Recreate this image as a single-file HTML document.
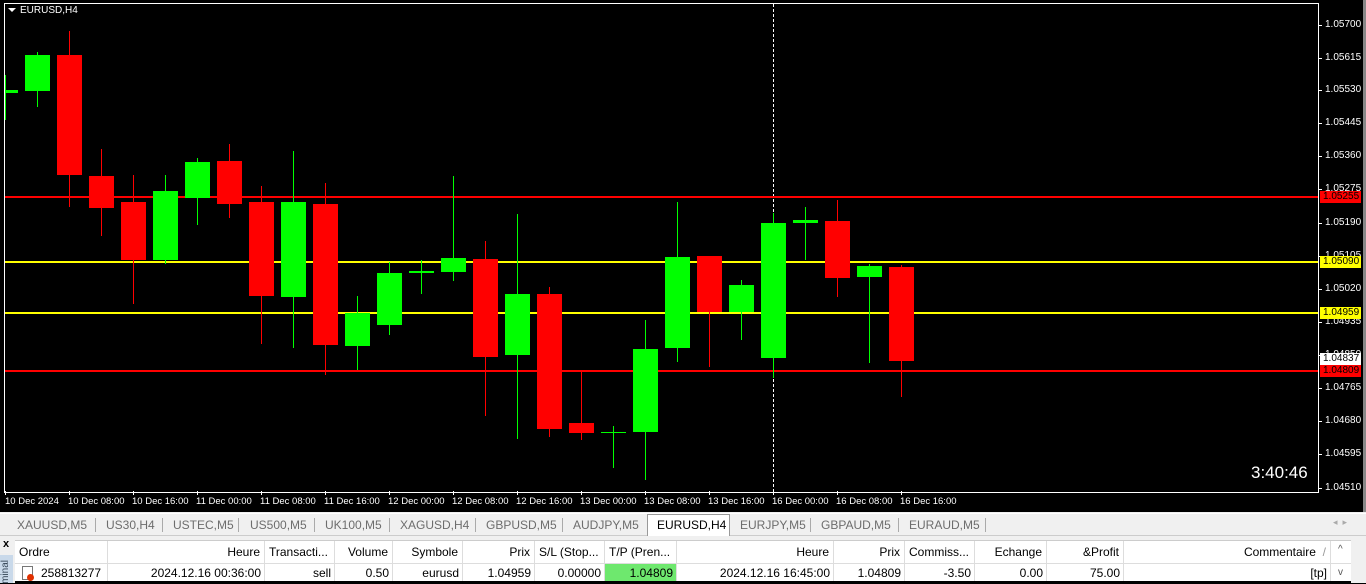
<!DOCTYPE html>
<html><head><meta charset="utf-8"><style>
*{margin:0;padding:0;box-sizing:border-box}
body{width:1366px;height:583px;overflow:hidden;background:#000;font-family:"Liberation Sans",sans-serif;position:relative}
.a{position:absolute}
.pl{position:absolute;left:1325px;font-size:10px;color:#fff;line-height:10px}
.tk{position:absolute;left:1318px;width:4px;height:1px;background:#fff}
.box{position:absolute;left:1320px;width:41px;height:12px;font-size:10px;line-height:12px;padding-left:3px}
.tl{position:absolute;top:496px;font-size:9.5px;color:#fff}
.tt{position:absolute;top:491px;width:1px;height:4px;background:#fff}
.tab{position:absolute;top:516px;font-size:12px;color:#6d6d6d;height:18px;line-height:18px}
.sep{position:absolute;top:518px;width:1px;height:14px;background:#aaa}
.h{position:absolute;top:541px;height:22px;line-height:22px;font-size:12px;color:#000;border-right:1px solid #ddd;padding:0 4px}
.r{position:absolute;top:564px;height:18px;line-height:18px;font-size:12px;color:#000;border-right:1px solid #ddd;padding:0 3px;text-align:right}
</style></head><body>
<div class="a" style="left:4px;top:3px;width:1315px;height:490px;border:1px solid #fff;border-right:1px solid #fff"></div>
<div class="a" style="left:8px;top:8px;width:0;height:0;border-left:4px solid transparent;border-right:4px solid transparent;border-top:4px solid #fff"></div>
<div class="a" style="left:20px;top:5px;font-size:10px;color:#fff">EURUSD,H4</div>
<div class="a" style="left:773px;top:4px;height:488px;border-left:1px dashed #fff"></div>
<div class="a" style="left:5px;top:196px;width:1313px;height:2px;background:#f00"></div>
<div class="a" style="left:5px;top:261px;width:1313px;height:2px;background:#ff0"></div>
<div class="a" style="left:5px;top:312px;width:1313px;height:2px;background:#ff0"></div>
<div class="a" style="left:5px;top:370px;width:1313px;height:2px;background:#f00"></div>
<svg class="a" style="left:0;top:0" width="1320" height="495" shape-rendering="crispEdges">
<g id="c"></g>
<script>/*static*/</script>
<!-- candles: x, color, wickTop, wickBot, bodyTop, bodyBot -->
<g stroke-width="1">
<line x1="5.5" y1="75" x2="5.5" y2="120" stroke="#0f0"/><rect x="5" y="90" width="13" height="3" fill="#0f0"/>
<line x1="37.5" y1="52" x2="37.5" y2="107" stroke="#0f0"/><rect x="25" y="55" width="25" height="36" fill="#0f0"/>
<line x1="69.5" y1="31" x2="69.5" y2="207" stroke="#f00"/><rect x="57" y="55" width="25" height="120" fill="#f00"/>
<line x1="101.5" y1="149" x2="101.5" y2="236" stroke="#f00"/><rect x="89" y="176" width="25" height="32" fill="#f00"/>
<line x1="133.5" y1="175" x2="133.5" y2="304" stroke="#f00"/><rect x="121" y="202" width="25" height="58" fill="#f00"/>
<line x1="165.5" y1="175" x2="165.5" y2="264" stroke="#0f0"/><rect x="153" y="191" width="25" height="69" fill="#0f0"/>
<line x1="197.5" y1="158" x2="197.5" y2="225" stroke="#0f0"/><rect x="185" y="162" width="25" height="36" fill="#0f0"/>
<line x1="229.5" y1="144" x2="229.5" y2="218" stroke="#f00"/><rect x="217" y="161" width="25" height="43" fill="#f00"/>
<line x1="261.5" y1="186" x2="261.5" y2="344" stroke="#f00"/><rect x="249" y="202" width="25" height="94" fill="#f00"/>
<line x1="293.5" y1="151" x2="293.5" y2="348" stroke="#0f0"/><rect x="281" y="202" width="25" height="95" fill="#0f0"/>
<line x1="325.5" y1="183" x2="325.5" y2="375" stroke="#f00"/><rect x="313" y="204" width="25" height="141" fill="#f00"/>
<line x1="357.5" y1="296" x2="357.5" y2="370" stroke="#0f0"/><rect x="345" y="313" width="25" height="33" fill="#0f0"/>
<line x1="389.5" y1="262" x2="389.5" y2="335" stroke="#0f0"/><rect x="377" y="273" width="25" height="52" fill="#0f0"/>
<line x1="421.5" y1="260" x2="421.5" y2="294" stroke="#0f0"/><rect x="409" y="271" width="25" height="2" fill="#0f0"/>
<line x1="453.5" y1="176" x2="453.5" y2="281" stroke="#0f0"/><rect x="441" y="258" width="25" height="14" fill="#0f0"/>
<line x1="485.5" y1="241" x2="485.5" y2="416" stroke="#f00"/><rect x="473" y="259" width="25" height="98" fill="#f00"/>
<line x1="517.5" y1="214" x2="517.5" y2="439" stroke="#0f0"/><rect x="505" y="294" width="25" height="61" fill="#0f0"/>
<line x1="549.5" y1="287" x2="549.5" y2="437" stroke="#f00"/><rect x="537" y="294" width="25" height="135" fill="#f00"/>
<line x1="581.5" y1="372" x2="581.5" y2="440" stroke="#f00"/><rect x="569" y="423" width="25" height="10" fill="#f00"/>
<line x1="613.5" y1="426" x2="613.5" y2="468" stroke="#0f0"/><rect x="601" y="432" width="25" height="1" fill="#0f0"/>
<line x1="645.5" y1="320" x2="645.5" y2="480" stroke="#0f0"/><rect x="633" y="349" width="25" height="83" fill="#0f0"/>
<line x1="677.5" y1="202" x2="677.5" y2="362" stroke="#0f0"/><rect x="665" y="257" width="25" height="91" fill="#0f0"/>
<line x1="709.5" y1="256" x2="709.5" y2="367" stroke="#f00"/><rect x="697" y="256" width="25" height="56" fill="#f00"/>
<line x1="741.5" y1="280" x2="741.5" y2="340" stroke="#0f0"/><rect x="729" y="285" width="25" height="27" fill="#0f0"/>
<line x1="773.5" y1="213" x2="773.5" y2="378" stroke="#0f0"/><rect x="761" y="223" width="25" height="135" fill="#0f0"/>
<line x1="805.5" y1="207" x2="805.5" y2="260" stroke="#0f0"/><rect x="793" y="220" width="25" height="3" fill="#0f0"/>
<line x1="837.5" y1="200" x2="837.5" y2="297" stroke="#f00"/><rect x="825" y="221" width="25" height="57" fill="#f00"/>
<line x1="869.5" y1="264" x2="869.5" y2="363" stroke="#0f0"/><rect x="857" y="266" width="25" height="11" fill="#0f0"/>
<line x1="901.5" y1="265" x2="901.5" y2="397" stroke="#f00"/><rect x="889" y="267" width="25" height="94" fill="#f00"/>
</g></svg>
<div class="a" style="left:1251px;top:463px;font-size:17px;color:#fff">3:40:46</div>

<div class="tk" style="top:25px"></div><div class="pl" style="top:20px">1.05700</div>
<div class="tk" style="top:58px"></div><div class="pl" style="top:53px">1.05615</div>
<div class="tk" style="top:90px"></div><div class="pl" style="top:85px">1.05530</div>
<div class="tk" style="top:123px"></div><div class="pl" style="top:118px">1.05445</div>
<div class="tk" style="top:156px"></div><div class="pl" style="top:151px">1.05360</div>
<div class="tk" style="top:189px"></div><div class="pl" style="top:184px">1.05275</div>
<div class="tk" style="top:223px"></div><div class="pl" style="top:218px">1.05190</div>
<div class="tk" style="top:256px"></div><div class="pl" style="top:251px">1.05105</div>
<div class="tk" style="top:289px"></div><div class="pl" style="top:284px">1.05020</div>
<div class="tk" style="top:322px"></div><div class="pl" style="top:317px">1.04935</div>
<div class="tk" style="top:355px"></div><div class="pl" style="top:350px">1.04850</div>
<div class="tk" style="top:388px"></div><div class="pl" style="top:383px">1.04765</div>
<div class="tk" style="top:421px"></div><div class="pl" style="top:416px">1.04680</div>
<div class="tk" style="top:454px"></div><div class="pl" style="top:449px">1.04595</div>
<div class="tk" style="top:488px"></div><div class="pl" style="top:483px">1.04510</div>
<div class="box" style="top:191px;background:#f00;color:#000">1.05255</div>
<div class="box" style="top:256px;background:#ff0;color:#000">1.05090</div>
<div class="box" style="top:307px;background:#ff0;color:#000">1.04959</div>
<div class="box" style="top:353px;background:#fff;color:#000">1.04837</div>
<div class="box" style="top:365px;background:#f00;color:#000">1.04809</div>
<div class="a" style="left:1363px;top:0;width:3px;height:512px;background:#888"></div>

<div class="tt" style="left:5px"></div><div class="tl" style="left:5px">10 Dec 2024</div>
<div class="tt" style="left:69px"></div><div class="tl" style="left:68px">10 Dec 08:00</div>
<div class="tt" style="left:133px"></div><div class="tl" style="left:132px">10 Dec 16:00</div>
<div class="tt" style="left:197px"></div><div class="tl" style="left:196px">11 Dec 00:00</div>
<div class="tt" style="left:261px"></div><div class="tl" style="left:260px">11 Dec 08:00</div>
<div class="tt" style="left:325px"></div><div class="tl" style="left:324px">11 Dec 16:00</div>
<div class="tt" style="left:389px"></div><div class="tl" style="left:388px">12 Dec 00:00</div>
<div class="tt" style="left:453px"></div><div class="tl" style="left:452px">12 Dec 08:00</div>
<div class="tt" style="left:517px"></div><div class="tl" style="left:516px">12 Dec 16:00</div>
<div class="tt" style="left:581px"></div><div class="tl" style="left:580px">13 Dec 00:00</div>
<div class="tt" style="left:645px"></div><div class="tl" style="left:644px">13 Dec 08:00</div>
<div class="tt" style="left:709px"></div><div class="tl" style="left:708px">13 Dec 16:00</div>
<div class="tt" style="left:773px"></div><div class="tl" style="left:772px">16 Dec 00:00</div>
<div class="tt" style="left:837px"></div><div class="tl" style="left:836px">16 Dec 08:00</div>
<div class="tt" style="left:901px"></div><div class="tl" style="left:900px">16 Dec 16:00</div>

<div class="a" style="left:0;top:512px;width:1366px;height:71px;background:#f0f0f0"></div>
<div class="a" style="left:0;top:513px;width:1366px;height:1px;background:#fff"></div>
<div class="a" style="left:0;top:535px;width:1366px;height:1px;background:#ccc"></div>
<div class="a" style="left:647px;top:514px;width:83px;height:22px;background:#fff;border:1px solid #999;border-bottom:none"></div>
<div class="tab" style="left:17px">XAUUSD,M5</div><div class="sep" style="left:95px"></div>
<div class="tab" style="left:106px">US30,H4</div><div class="sep" style="left:162px"></div>
<div class="tab" style="left:173px">USTEC,M5</div><div class="sep" style="left:238px"></div>
<div class="tab" style="left:250px">US500,M5</div><div class="sep" style="left:314px"></div>
<div class="tab" style="left:325px">UK100,M5</div><div class="sep" style="left:389px"></div>
<div class="tab" style="left:400px">XAGUSD,H4</div><div class="sep" style="left:475px"></div>
<div class="tab" style="left:486px">GBPUSD,M5</div><div class="sep" style="left:562px"></div>
<div class="tab" style="left:573px">AUDJPY,M5</div>
<div class="tab" style="left:657px;color:#000">EURUSD,H4</div>
<div class="tab" style="left:740px">EURJPY,M5</div><div class="sep" style="left:810px"></div>
<div class="tab" style="left:821px">GBPAUD,M5</div><div class="sep" style="left:898px"></div>
<div class="tab" style="left:909px">EURAUD,M5</div><div class="sep" style="left:985px"></div>
<div class="a" style="left:1333px;top:517px;font-size:9px;color:#aaa">◂ &nbsp;▸</div>

<div class="a" style="left:3px;top:538px;font-size:11px;font-weight:bold;color:#000">x</div>
<div class="a" style="left:0;top:555px;width:13px;height:28px;background:#c9d9ea"></div>
<div class="a" style="left:0;top:560px;font-size:10px;color:#345;writing-mode:vertical-rl;transform:rotate(180deg)">minal</div>
<div class="a" style="left:15px;top:540px;width:1336px;height:43px;background:#fff;border-top:1px solid #ccc"></div>
<div class="a" style="left:15px;top:563px;width:1336px;height:1px;background:#ddd"></div>
<div class="h" style="left:15px;width:93px">Ordre</div>
<div class="h" style="left:108px;width:157px;text-align:right">Heure</div>
<div class="h" style="left:265px;width:70px">Transacti...</div>
<div class="h" style="left:335px;width:58px;text-align:right">Volume</div>
<div class="h" style="left:393px;width:70px;text-align:right">Symbole</div>
<div class="h" style="left:463px;width:72px;text-align:right">Prix</div>
<div class="h" style="left:535px;width:70px">S/L (Stop...</div>
<div class="h" style="left:605px;width:72px">T/P (Pren...</div>
<div class="h" style="left:677px;width:157px;text-align:right">Heure</div>
<div class="h" style="left:834px;width:71px;text-align:right">Prix</div>
<div class="h" style="left:905px;width:70px">Commiss...</div>
<div class="h" style="left:975px;width:72px;text-align:right">Echange</div>
<div class="h" style="left:1047px;width:77px;text-align:right">&amp;Profit</div>
<div class="h" style="left:1124px;width:207px;text-align:right">Commentaire &nbsp;<span style="color:#999">/</span></div>
<div class="a" style="left:1338px;top:544px;font-size:10px;color:#555">^</div>
<div class="a" style="left:1338px;top:567px;font-size:10px;color:#555">v</div>
<div class="a" style="left:22px;top:566px;width:11px;height:14px;border:1px solid #777;background:#fff"></div>
<div class="a" style="left:27px;top:574px;width:7px;height:7px;border-radius:50%;background:#e03000"></div>
<div class="r" style="left:38px;width:70px;text-align:left">258813277</div>
<div class="r" style="left:108px;width:157px">2024.12.16 00:36:00</div>
<div class="r" style="left:265px;width:70px">sell</div>
<div class="r" style="left:335px;width:58px">0.50</div>
<div class="r" style="left:393px;width:70px">eurusd</div>
<div class="r" style="left:463px;width:72px">1.04959</div>
<div class="r" style="left:535px;width:70px">0.00000</div>
<div class="r" style="left:605px;width:72px;background:#6ee86e">1.04809</div>
<div class="r" style="left:677px;width:157px">2024.12.16 16:45:00</div>
<div class="r" style="left:834px;width:71px">1.04809</div>
<div class="r" style="left:905px;width:70px">-3.50</div>
<div class="r" style="left:975px;width:72px">0.00</div>
<div class="r" style="left:1047px;width:77px">75.00</div>
<div class="r" style="left:1124px;width:207px">[tp]</div>
<div class="a" style="left:15px;top:581px;width:1336px;height:2px;background:#000"></div>
</body></html>
